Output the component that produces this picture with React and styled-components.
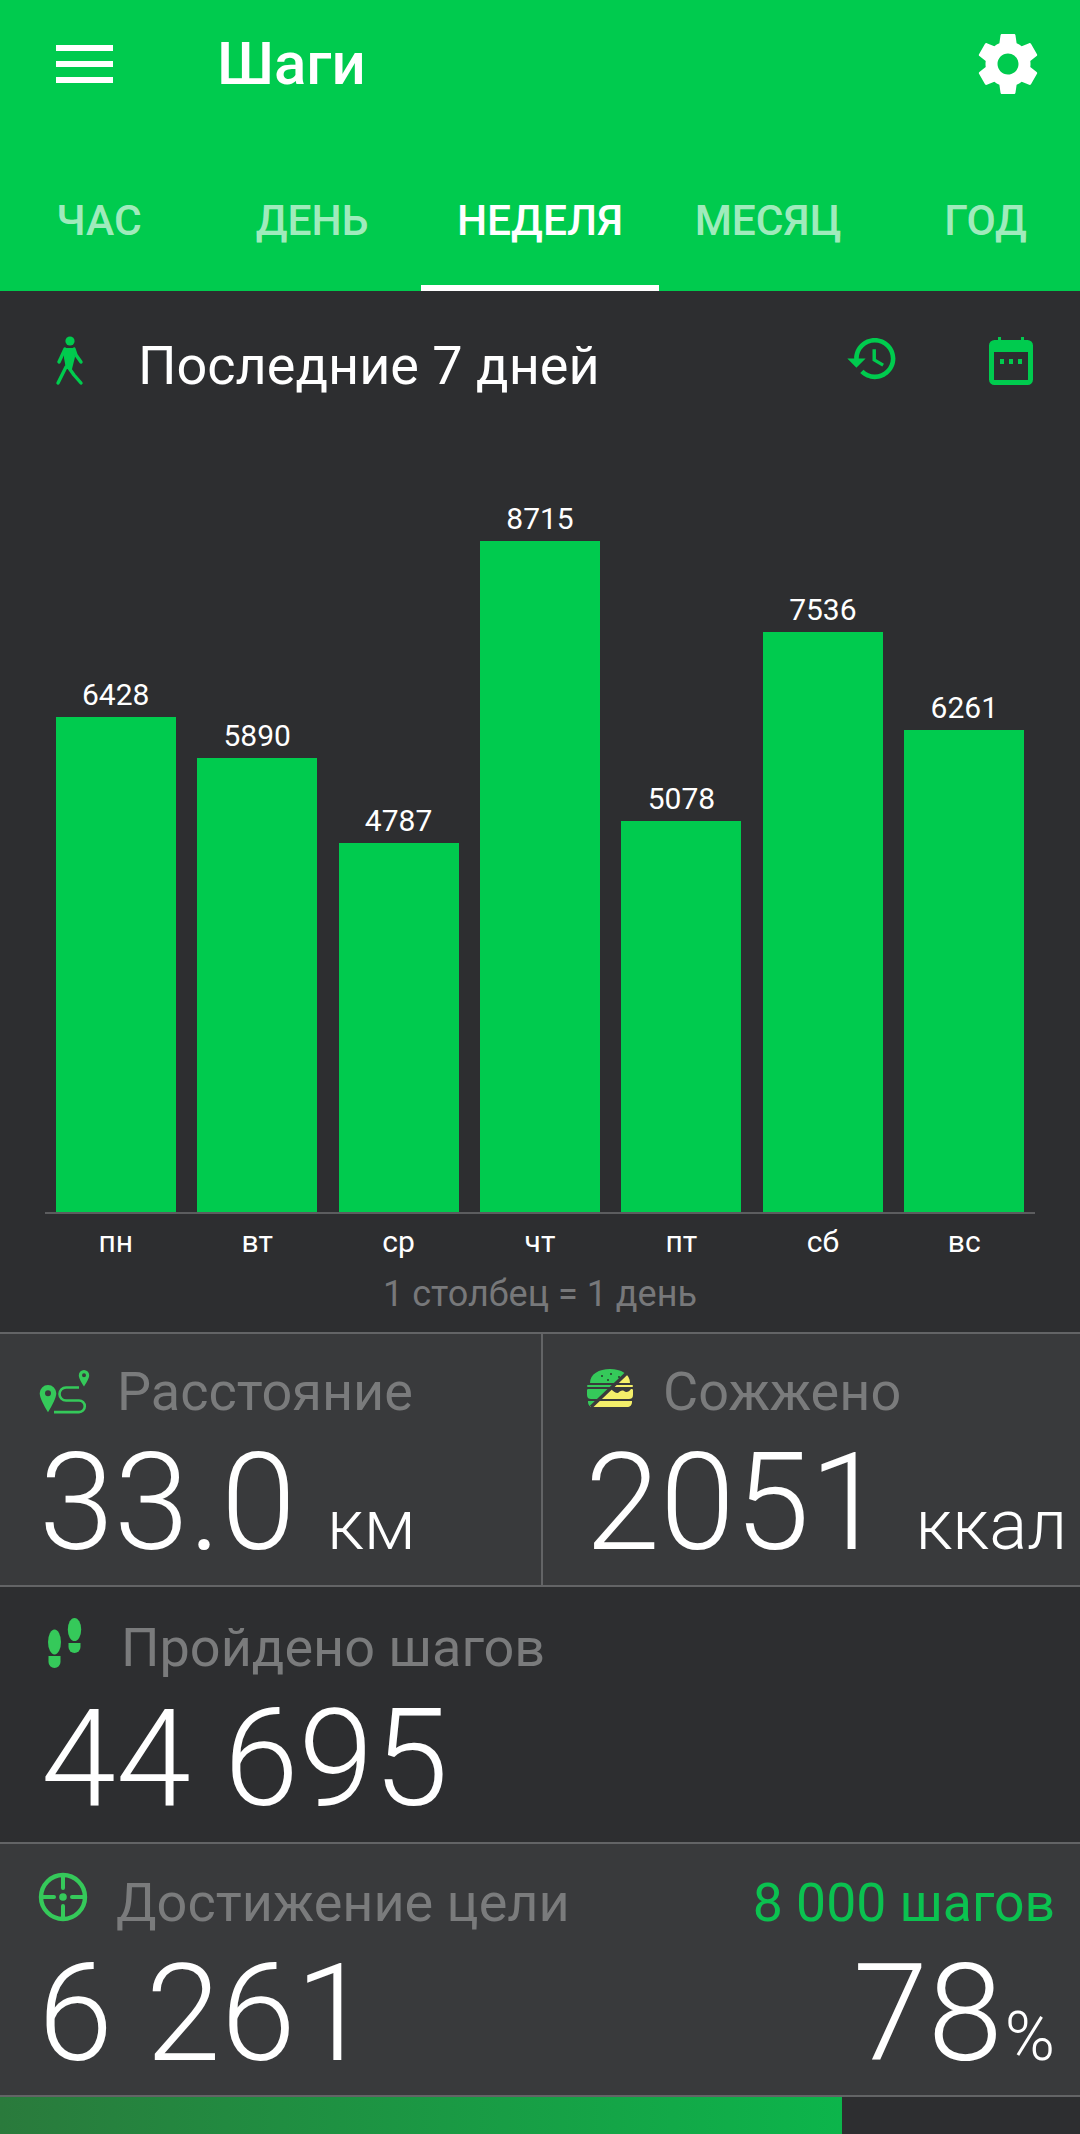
import React from "react";
import styled, { createGlobalStyle } from "styled-components";

const GREEN = "#00cb4e";
const ICON_GREEN = "#35c95a";

const days = [
  { day: "пн", steps: 6428 },
  { day: "вт", steps: 5890 },
  { day: "ср", steps: 4787 },
  { day: "чт", steps: 8715 },
  { day: "пт", steps: 5078 },
  { day: "сб", steps: 7536 },
  { day: "вс", steps: 6261 },
];

const tabs = [
  { label: "ЧАС", width: 198 },
  { label: "ДЕНЬ", width: 223, nudge: 5 },
  { label: "НЕДЕЛЯ", width: 238, active: true },
  { label: "МЕСЯЦ", width: 218 },
  { label: "ГОД", width: 203, nudge: 14 },
];

const GlobalStyle = createGlobalStyle`
  html, body {
    margin: 0;
    padding: 0;
    background: #2d2e30;
  }
  body {
    font-family: Roboto, "Noto Sans", sans-serif;
    color: #fff;
  }
`;

const Page = styled.div`
  width: 1080px;
  height: 2134px;
  display: flex;
  flex-direction: column;
  overflow: hidden;
`;

const Header = styled.header`
  height: 291px;
  flex: none;
  background: ${GREEN};
  display: flex;
  flex-direction: column;
  justify-content: space-between;
`;

const TopBar = styled.div`
  display: flex;
  align-items: center;
  height: 64px;
  padding: 32px 36px 0 56px;
`;

const Burger = styled.div`
  width: 57px;
  height: 38px;
  display: flex;
  flex-direction: column;
  justify-content: space-between;
  span {
    display: block;
    height: 6px;
    background: #fff;
  }
`;

const Title = styled.h1`
  margin: 0 0 0 104px;
  flex: 1;
  font-size: 60px;
  font-weight: 500;
  line-height: 64px;
`;

const Tabs = styled.nav`
  display: flex;
  height: 100px;
`;

const Tab = styled.div`
  width: ${(p) => p.$width}px;
  padding: 0 0 36px ${(p) => p.$nudge || 0}px;
  box-sizing: border-box;
  display: flex;
  align-items: center;
  justify-content: center;
  font-size: 42.5px;
  font-weight: 500;
  color: ${(p) => (p.$active ? "#fff" : "rgba(255,255,255,0.65)")};
  border-bottom: 6px solid ${(p) => (p.$active ? "#fff" : "transparent")};
`;

const ChartSection = styled.section`
  height: 1041px;
  flex: none;
  display: flex;
  flex-direction: column;
`;

const RangeRow = styled.div`
  display: flex;
  align-items: center;
  height: 60px;
  padding: 45px 47px 0 50px;
`;

const RangeIcon = styled.div`
  display: flex;
  margin-bottom: 10px;
`;

const RangeTitle = styled.div`
  flex: 1;
  margin-left: 54px;
  font-size: 54px;
  line-height: 60px;
`;

const RangeActions = styled.div`
  display: flex;
  align-items: center;
  gap: 89px;
  margin-bottom: 12px;
`;

const HistoryIcon = styled.svg`
  margin-bottom: 4px;
`;

const Plot = styled.div`
  margin: 0 45px;
  height: 757px;
  margin-top: 59px;
  display: grid;
  grid-template-columns: repeat(7, 1fr);
  border-bottom: 2px solid #5c5d5f;
`;

const BarColumn = styled.div`
  display: flex;
  flex-direction: column;
  justify-content: flex-end;
  align-items: center;
`;

const BarValue = styled.div`
  font-size: 30px;
  line-height: 36px;
  margin-bottom: 4px;
`;

const Bar = styled.div`
  width: 120px;
  background: ${GREEN};
`;

const DayRow = styled.div`
  margin: 10px 45px 0;
  display: grid;
  grid-template-columns: repeat(7, 1fr);
`;

const Day = styled.div`
  text-align: center;
  font-size: 30px;
  line-height: 36px;
`;

const Caption = styled.div`
  margin-top: 14px;
  text-align: center;
  font-size: 36px;
  line-height: 40px;
  color: #77787a;
`;

const StatRow = styled.div`
  display: grid;
  grid-template-columns: ${(p) => (p.$split ? "541px 1fr" : "1fr")};
  height: ${(p) => p.$height}px;
  flex: none;
  box-sizing: border-box;
  border-top: 2px solid #636466;
  background: ${(p) => (p.$light ? "#393a3c" : "#2d2e30")};
`;

const Stat = styled.div`
  padding: ${(p) => p.$top}px 0 0 ${(p) => p.$left}px;
  border-left: ${(p) => (p.$divider ? "2px solid #636466" : "none")};
  min-width: 0;
`;

const StatLabelRow = styled.div`
  display: flex;
  align-items: center;
  justify-content: space-between;
  height: 60px;
`;

const StatLabel = styled.div`
  display: flex;
  align-items: center;
  font-size: 54px;
  line-height: 60px;
  color: #7a7b7c;
  svg {
    flex: none;
    display: block;
  }
`;

const ValueRow = styled.div`
  display: flex;
  align-items: baseline;
  justify-content: space-between;
  margin-top: ${(p) => p.$gap}px;
  line-height: 130px;
  white-space: nowrap;
`;

const Value = styled.span`
  font-size: 135px;
  font-weight: 300;
`;

const Unit = styled.span`
  font-size: 71px;
  font-weight: 300;
  margin-left: ${(p) => p.$gap}px;
`;

const Percent = styled.span`
  font-size: 68px;
  font-weight: 300;
  margin-left: 2px;
`;

const Goal = styled.div`
  font-size: 53.5px;
  line-height: 60px;
  color: #0bc250;
  padding-right: 25px;
`;

const RightValue = styled.div`
  padding-right: 25px;
`;

const Progress = styled.div`
  flex: 1;
  background: #2d2e30;
  border-top: 2px solid #636466;
`;

const ProgressFill = styled.div`
  height: 100%;
  background: linear-gradient(90deg, #2a7a3c 0%, #0cb54b 100%);
`;

const HISTORY =
  "M13 3c-4.97 0-9 4.03-9 9H1l3.89 3.89.07.14L9 12H6c0-3.87 3.13-7 7-7s7 3.13 7 7-3.13 7-7 7c-1.93 0-3.68-.79-4.94-2.06l-1.42 1.42C8.27 19.99 10.51 21 13 21c4.97 0 9-4.03 9-9s-4.03-9-9-9zm-1 5v5l4.28 2.54.72-1.21-3.5-2.08V8H12z";
const GEAR =
  "M19.43 12.98c.04-.32.07-.64.07-.98s-.03-.66-.07-.98l2.11-1.65c.19-.15.24-.42.12-.64l-2-3.46c-.12-.22-.39-.3-.61-.22l-2.49 1c-.52-.4-1.08-.73-1.69-.98l-.38-2.65C14.46 2.18 14.25 2 14 2h-4c-.25 0-.46.18-.49.42l-.38 2.65c-.61.25-1.17.59-1.69.98l-2.49-1c-.23-.09-.49 0-.61.22l-2 3.46c-.13.22-.07.49.12.64l2.11 1.65c-.04.32-.07.65-.07.98s.03.66.07.98l-2.11 1.65c-.19.15-.24.42-.12.64l2 3.46c.12.22.39.3.61.22l2.49-1c.52.4 1.08.73 1.69.98l.38 2.65c.03.24.24.42.49.42h4c.25 0 .46-.18.49-.42l.38-2.65c.61-.25 1.17-.59 1.69-.98l2.49 1c.23.09.49 0 .61-.22l2-3.46c.12-.22.07-.49-.12-.64l-2.11-1.65zM12 15.5c-1.93 0-3.5-1.57-3.5-3.5s1.57-3.5 3.5-3.5 3.5 1.57 3.5 3.5-1.57 3.5-3.5 3.5z";

const WalkIcon = () => (
  <svg width="34" height="52" viewBox="0 0 34 52" fill="none">
    <circle cx="20" cy="6" r="4.6" fill={GREEN} />
    <path d="M14 13h10l1 9-3 12h-6l-2-11z" fill={GREEN} />
    <g stroke={GREEN} strokeWidth="3.4" strokeLinecap="round" strokeLinejoin="round">
      <path d="M15 14 9 27" />
      <path d="M24 14l2 6 5 7" />
      <path d="M16 32 8 48" />
      <path d="M19 33l5 7 7 8" />
    </g>
  </svg>
);

const CalendarIcon = () => (
  <svg width="44" height="49" viewBox="0 0 44 49" fill="none">
    <path d="M9 1h3v6H9zM32 1h3v6h-3z" fill={GREEN} />
    <rect x="2.5" y="6.5" width="39" height="40" rx="3" stroke={GREEN} strokeWidth="5" />
    <rect x="3" y="7" width="38" height="9" fill={GREEN} />
    <path d="M11 23h4v5h-4zM20 23h4v5h-4zM29 23h4v5h-4z" fill={GREEN} />
  </svg>
);

const RouteIcon = () => (
  <svg width="54" height="44" viewBox="0 0 54 44" fill="none" style={{ margin: "0 26px 0 -2px" }}>
    <path
      fillRule="evenodd"
      d="M11 15a8.3 8.3 0 0 1 8.3 8.3c0 4.4-4.3 12.5-8.3 19-4-6.5-8.3-14.6-8.3-19A8.3 8.3 0 0 1 11 15zm0 5.2a3 3 0 1 0 0 6 3 3 0 0 0 0-6z"
      fill={ICON_GREEN}
    />
    <path
      fillRule="evenodd"
      d="M47 0a5.2 5.2 0 0 1 5.2 5.2c0 2.8-2.6 7.6-5.2 11.2-2.6-3.6-5.2-8.4-5.2-11.2A5.2 5.2 0 0 1 47 0zm0 3.3a2 2 0 1 0 0 4 2 2 0 0 0 0-4z"
      fill={ICON_GREEN}
    />
    <path
      d="M42 17.5H29a6.5 6.5 0 0 0 0 13h13a5.8 5.8 0 0 1 0 11.6H17"
      stroke={ICON_GREEN}
      strokeWidth="2.6"
    />
  </svg>
);

const BurgerShapes = ({ fill }) => (
  <g fill={fill}>
    <path d="M3 14C3 5 12 0 23 0s20 5 20 14z" />
    <path d="M1 16h44a1 1 0 0 1 0 2H1a1 1 0 0 1 0-2z" />
    <path d="M1 20h44c1 0 1 1 1 2v4c0 3-2 4-4 4H4c-2 0-4-1-4-4v-4c0-1 0-2 1-2z" />
    <path d="M1 32h44v1c0 3-2 5-5 5H6c-3 0-5-2-5-5z" />
  </g>
);

const CaloriesIcon = () => (
  <svg width="46" height="40" viewBox="0 0 46 40" fill="none" style={{ margin: "-6px 30px 0 2px" }}>
    <defs>
      <clipPath id="burger-top">
        <path d="M0 0h44L0 41z" />
      </clipPath>
      <clipPath id="burger-bottom">
        <path d="M46 0v40H0z" />
      </clipPath>
    </defs>
    <g clipPath="url(#burger-top)">
      <BurgerShapes fill={ICON_GREEN} />
      <path d="M14 6h2v2h-2zM23 4h2v2h-2zM31 7h2v2h-2zM20 10h2v2h-2z" fill="#2a5c38" />
    </g>
    <g clipPath="url(#burger-bottom)">
      <BurgerShapes fill="#f4ef6a" />
      <path d="M24 20h20c-2 3-5 4-7 2-2-1-4 0-6 2-3 0-5-2-7-4z" fill="#393a3c" />
    </g>
    <path d="M42 2 4 38" stroke="#393a3c" strokeWidth="3.4" />
  </svg>
);

const StepsIcon = () => (
  <svg width="34" height="50" viewBox="0 0 34 50" fill="none" style={{ margin: "-10px 39px 0 7px" }}>
    <ellipse cx="6.5" cy="24" rx="6.5" ry="12.5" fill={ICON_GREEN} />
    <path d="M0.5 38h12v6a6 6 0 0 1-12 0z" fill={ICON_GREEN} />
    <ellipse cx="26.5" cy="11.5" rx="6.7" ry="11.5" fill={ICON_GREEN} />
    <path d="M20.5 25h12v4a6 6 0 0 1-12 0z" fill={ICON_GREEN} />
  </svg>
);

const TargetIcon = () => (
  <svg width="50" height="50" viewBox="0 0 50 50" fill="none" style={{ margin: "-12px 28px 0 0" }}>
    <circle cx="25" cy="25" r="22" stroke={ICON_GREEN} strokeWidth="4.4" />
    <circle cx="25" cy="25" r="3.8" fill={ICON_GREEN} />
    <path d="M25 4v12M25 34v12M4 25h12M34 25h12" stroke={ICON_GREEN} strokeWidth="4" strokeLinecap="round" />
  </svg>
);

const App = () => (
  <Page>
    <GlobalStyle />
    <Header>
      <TopBar>
        <Burger>
          <span />
          <span />
          <span />
        </Burger>
        <Title>Шаги</Title>
        <svg width="72" height="72" viewBox="0 0 24 24" fill="#fff">
          <path d={GEAR} />
        </svg>
      </TopBar>
      <Tabs>
        {tabs.map((t) => (
          <Tab key={t.label} $width={t.width} $nudge={t.nudge} $active={t.active}>
            {t.label}
          </Tab>
        ))}
      </Tabs>
    </Header>

    <ChartSection>
      <RangeRow>
        <RangeIcon>
          <WalkIcon />
        </RangeIcon>
        <RangeTitle>Последние 7 дней</RangeTitle>
        <RangeActions>
          <HistoryIcon width="55" height="55" viewBox="0 0 24 24" fill={GREEN}>
            <path d={HISTORY} />
          </HistoryIcon>
          <CalendarIcon />
        </RangeActions>
      </RangeRow>
      <Plot>
        {days.map((d) => (
          <BarColumn key={d.day}>
            <BarValue>{d.steps}</BarValue>
            <Bar style={{ height: d.steps * 0.077 }} />
          </BarColumn>
        ))}
      </Plot>
      <DayRow>
        {days.map((d) => (
          <Day key={d.day}>{d.day}</Day>
        ))}
      </DayRow>
      <Caption>1 столбец = 1 день</Caption>
    </ChartSection>

    <StatRow $split $light $height={253}>
      <Stat $left={39} $top={28}>
        <StatLabelRow>
          <StatLabel>
            <RouteIcon />
            Расстояние
          </StatLabel>
        </StatLabelRow>
        <ValueRow $gap={16}>
          <span>
            <Value>33.0</Value>
            <Unit $gap={31}>км</Unit>
          </span>
        </ValueRow>
      </Stat>
      <Stat $left={42} $top={28} $divider>
        <StatLabelRow>
          <StatLabel>
            <CaloriesIcon />
            Сожжено
          </StatLabel>
        </StatLabelRow>
        <ValueRow $gap={16}>
          <span>
            <Value>2051</Value>
            <Unit $gap={31}>ккал</Unit>
          </span>
        </ValueRow>
      </Stat>
    </StatRow>

    <StatRow $height={257}>
      <Stat $left={41} $top={31}>
        <StatLabelRow>
          <StatLabel>
            <StepsIcon />
            Пройдено шагов
          </StatLabel>
        </StatLabelRow>
        <ValueRow $gap={16}>
          <Value>44 695</Value>
        </ValueRow>
      </Stat>
    </StatRow>

    <StatRow $light $height={253}>
      <Stat $left={38} $top={29}>
        <StatLabelRow>
          <StatLabel>
            <TargetIcon />
            Достижение цели
          </StatLabel>
          <Goal>8 000 шагов</Goal>
        </StatLabelRow>
        <ValueRow $gap={16}>
          <Value>6 261</Value>
          <RightValue>
            <Value>78</Value>
            <Percent>%</Percent>
          </RightValue>
        </ValueRow>
      </Stat>
    </StatRow>

    <Progress>
      <ProgressFill style={{ width: "78%" }} />
    </Progress>
  </Page>
);

export default App;
